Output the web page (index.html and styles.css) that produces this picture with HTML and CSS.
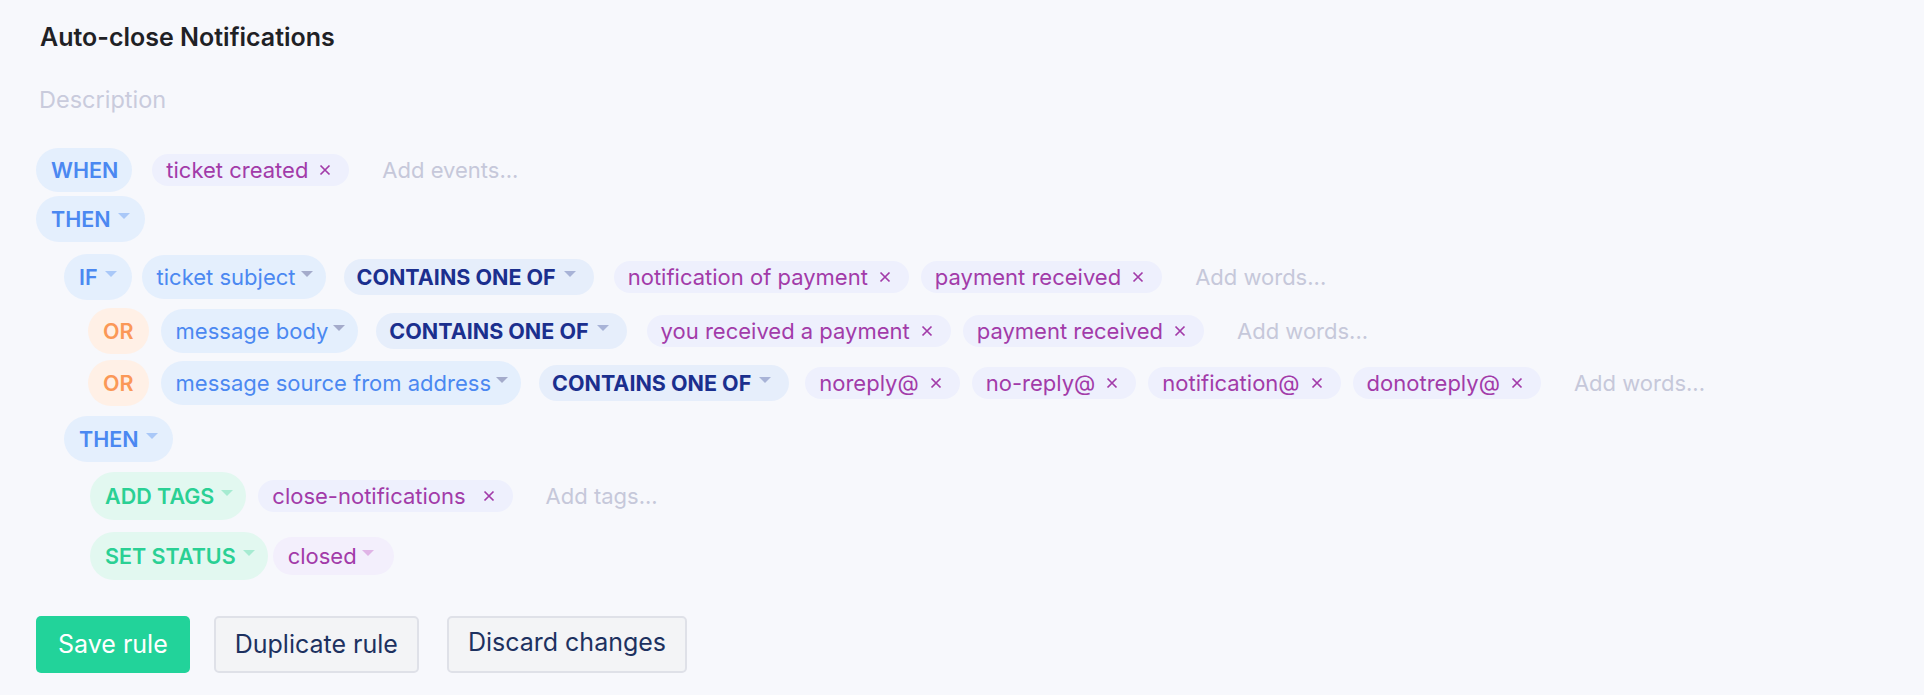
FILE: index.html
```html
<!DOCTYPE html>
<html>
<head>
<meta charset="utf-8">
<link rel="stylesheet" href="styles.css">
</head>
<body>
<div class="page">
  <h1 class="title">Auto-close Notifications</h1>
  <div class="desc">Description</div>

  <div class="rule">
    <div class="row row-when">
      <span class="kw kw-blue kw-nocaret">WHEN</span>
      <span class="chip gap-20">ticket created<svg class="x" viewBox="0 0 12 12"><path d="M1.5 1.5L10.5 10.5M10.5 1.5L1.5 10.5"/></svg></span>
      <span class="ph">Add events...</span>
    </div>
    <div class="row row-then">
      <span class="kw kw-blue">THEN<svg class="caret" viewBox="0 0 12 6"><path d="M0 0H12L6 6Z"/></svg></span>
    </div>

    <div class="block">
      <div class="row row-if">
        <span class="kw kw-blue">IF<svg class="caret" viewBox="0 0 12 6"><path d="M0 0H12L6 6Z"/></svg></span>
        <span class="field gap-10">ticket subject<svg class="caret caret-gray" viewBox="0 0 12 6"><path d="M0 0H12L6 6Z"/></svg></span>
        <span class="op">CONTAINS ONE OF<svg class="caret caret-op" viewBox="0 0 12 6"><path d="M0 0H12L6 6Z"/></svg></span>
        <span class="chip">notification of payment<svg class="x" viewBox="0 0 12 12"><path d="M1.5 1.5L10.5 10.5M10.5 1.5L1.5 10.5"/></svg></span>
        <span class="chip chip-next">payment received<svg class="x" viewBox="0 0 12 12"><path d="M1.5 1.5L10.5 10.5M10.5 1.5L1.5 10.5"/></svg></span>
        <span class="ph">Add words...</span>
      </div>

      <div class="sub">
        <div class="row row-or">
          <span class="kw kw-orange">OR</span>
          <span class="field">message body<svg class="caret caret-gray" viewBox="0 0 12 6"><path d="M0 0H12L6 6Z"/></svg></span>
          <span class="op">CONTAINS ONE OF<svg class="caret caret-op" viewBox="0 0 12 6"><path d="M0 0H12L6 6Z"/></svg></span>
          <span class="chip">you received a payment<svg class="x" viewBox="0 0 12 12"><path d="M1.5 1.5L10.5 10.5M10.5 1.5L1.5 10.5"/></svg></span>
          <span class="chip chip-next">payment received<svg class="x" viewBox="0 0 12 12"><path d="M1.5 1.5L10.5 10.5M10.5 1.5L1.5 10.5"/></svg></span>
          <span class="ph">Add words...</span>
        </div>
        <div class="row row-or">
          <span class="kw kw-orange">OR</span>
          <span class="field">message source from address<svg class="caret caret-gray" viewBox="0 0 12 6"><path d="M0 0H12L6 6Z"/></svg></span>
          <span class="op">CONTAINS ONE OF<svg class="caret caret-op" viewBox="0 0 12 6"><path d="M0 0H12L6 6Z"/></svg></span>
          <span class="chip gap-16">noreply@<svg class="x" viewBox="0 0 12 12"><path d="M1.5 1.5L10.5 10.5M10.5 1.5L1.5 10.5"/></svg></span>
          <span class="chip chip-next">no-reply@<svg class="x" viewBox="0 0 12 12"><path d="M1.5 1.5L10.5 10.5M10.5 1.5L1.5 10.5"/></svg></span>
          <span class="chip chip-next">notification@<svg class="x" viewBox="0 0 12 12"><path d="M1.5 1.5L10.5 10.5M10.5 1.5L1.5 10.5"/></svg></span>
          <span class="chip chip-next">donotreply@<svg class="x" viewBox="0 0 12 12"><path d="M1.5 1.5L10.5 10.5M10.5 1.5L1.5 10.5"/></svg></span>
          <span class="ph">Add words...</span>
        </div>
      </div>

      <div class="row row-then2">
        <span class="kw kw-blue">THEN<svg class="caret" viewBox="0 0 12 6"><path d="M0 0H12L6 6Z"/></svg></span>
      </div>

      <div class="sub sub-actions">
        <div class="row row-act">
          <span class="kw kw-green kw-tall">ADD TAGS<svg class="caret" viewBox="0 0 12 6"><path d="M0 0H12L6 6Z"/></svg></span>
          <span class="chip chip-wide gap-12">close-notifications<svg class="x" viewBox="0 0 12 12"><path d="M1.5 1.5L10.5 10.5M10.5 1.5L1.5 10.5"/></svg></span>
          <span class="ph">Add tags...</span>
        </div>
        <div class="row row-act">
          <span class="kw kw-green kw-tall">SET STATUS<svg class="caret" viewBox="0 0 12 6"><path d="M0 0H12L6 6Z"/></svg></span>
          <span class="status">closed<svg class="caret caret-pink" viewBox="0 0 12 6"><path d="M0 0H12L6 6Z"/></svg></span>
        </div>
      </div>
    </div>
  </div>

  <div class="actions">
    <button class="btn btn-primary">Save rule</button>
    <button class="btn btn-secondary">Duplicate rule</button>
    <button class="btn btn-secondary btn-raised">Discard changes</button>
  </div>
</div>
</body>
</html>
```

FILE: styles.css
```css
* {
  box-sizing: border-box;
  margin: 0;
  padding: 0;
}

html, body {
  background: #f7f8fc;
}

body {
  font-family: Inter, "Noto Sans", sans-serif;
  width: 1924px;
  height: 695px;
  overflow: hidden;
}

.page {
  padding: 23px 36px 0 36px;
}

.title {
  font-size: 25px;
  line-height: 29px;
  font-weight: 600;
  color: #1f2125;
  padding-left: 4px;
}

.desc {
  margin-top: 33px;
  font-size: 23.5px;
  line-height: 29px;
  color: #c9cbdc;
  padding-left: 3px;
}

.rule {
  margin-top: 34px;
}

.row {
  display: flex;
  align-items: center;
}

.row-when { margin-bottom: 4px; }
.row-then { margin-bottom: 12px; }
.row-if { margin-bottom: 8px; }
.row-or { margin-bottom: 6px; }
.row-then2 { margin-top: 10px; margin-bottom: 10px; }
.row-act { margin-bottom: 12px; }
.row-act:last-child { margin-bottom: 0; }

.block {
  padding-left: 28px;
}

.sub {
  padding-left: 24px;
}

.sub-actions {
  padding-left: 26px;
}

/* keyword pills */
.kw {
  display: inline-flex;
  align-items: center;
  height: 46px;
  padding: 0 15px 0 15px;
  border-radius: 23px;
  font-size: 21.5px;
  font-weight: 600;
  white-space: nowrap;
}

.kw-nocaret {
  height: 44px;
  border-radius: 22px;
  padding: 0 14px 0 15px;
}

.kw-tall {
  height: 48px;
  border-radius: 24px;
  padding: 0 13px 0 15px;
}

.kw-blue {
  background: #e4effd;
  color: #4b88f1;
}
.kw-blue .caret { fill: #a9c8f8; }

.kw-orange {
  background: #fff0e6;
  color: #fb9857;
}

.kw-green {
  background: #e2f8f0;
  color: #2ad094;
}
.kw-green .caret { fill: #a6ebd1; }

.caret {
  width: 12px;
  height: 6px;
  margin-left: 7px;
  margin-top: -6px;
  flex: none;
}

/* field select */
.field {
  display: inline-flex;
  align-items: center;
  height: 44px;
  padding: 0 13px 0 15px;
  border-radius: 22px;
  background: #e4effd;
  color: #4b88f1;
  font-size: 22px;
  white-space: nowrap;
  margin-left: 12px;
}

.caret-gray { fill: #a4abcb; margin-left: 5px; }

/* operator */
.op {
  display: inline-flex;
  align-items: center;
  height: 36px;
  padding: 0 18px 0 13px;
  border-radius: 18px;
  background: #e6eefb;
  color: #1b2f8e;
  font-size: 21.5px;
  font-weight: 700;
  white-space: nowrap;
  margin-left: 18px;
}

.caret-op { fill: #a8b3d7; margin-left: 8px; }

/* word chips */
.chip {
  display: inline-flex;
  align-items: center;
  height: 32px;
  padding: 0 18px 0 14px;
  border-radius: 16px;
  background: #eef0fd;
  color: #a23ba9;
  font-size: 22px;
  white-space: nowrap;
  margin-left: 20px;
}

.chip-next {
  margin-left: 12px;
}

.chip-wide .x {
  margin-left: 17px;
}

.x {
  width: 12px;
  height: 12px;
  margin-left: 11px;
  flex: none;
  stroke: #a23ba9;
  stroke-width: 1.7;
  fill: none;
}

.ph {
  margin-left: 33px;
  font-size: 22px;
  color: #c6c8da;
  white-space: nowrap;
}

/* status select */
.status {
  display: inline-flex;
  align-items: center;
  height: 38px;
  padding: 0 20px 0 15px;
  border-radius: 19px;
  background: #f3effc;
  color: #a23ba9;
  font-size: 22px;
  margin-left: 5px;
}

.caret-pink { fill: #e0b4e6; margin-left: 5px; }

/* spacing modifiers */
.gap-10 { margin-left: 10px; }
.gap-12 { margin-left: 12px; }
.gap-16 { margin-left: 16px; }
.gap-20 { margin-left: 20px; }

/* buttons */
.actions {
  display: flex;
  align-items: flex-start;
  margin-top: 36px;
}

.btn {
  font-family: Inter, "Noto Sans", sans-serif;
  font-size: 25px;
  height: 57px;
  border-radius: 5px;
  line-height: 1;
  cursor: pointer;
}

.btn-primary {
  background: #22d39a;
  color: #ffffff;
  border: none;
  padding: 0 22px;
}

.btn-secondary {
  background: #f3f4f6;
  color: #1d3160;
  border: 2px solid #dfe1e8;
  padding: 0 19px;
  margin-left: 24px;
}

.btn-raised {
  margin-left: 28px;
  padding-bottom: 4px;
}
```
